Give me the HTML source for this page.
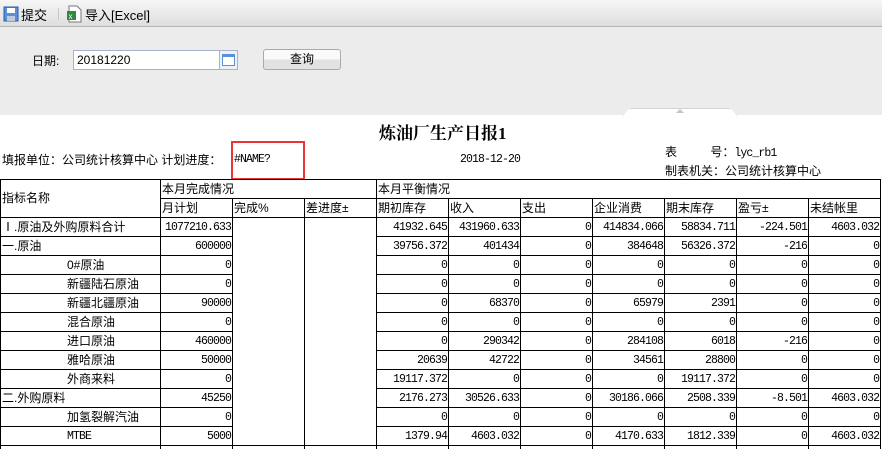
<!DOCTYPE html>
<html style="overflow:hidden;width:882px;height:449px"><head><meta charset="utf-8"><style>
*{margin:0;padding:0;box-sizing:border-box}
body{width:882px;height:449px;overflow:hidden;background:#fff;font-family:"Liberation Sans","Noto Sans CJK SC",sans-serif;font-size:12px;color:#000;position:relative}
.tb{position:absolute;left:0;top:0;width:882px;height:27px;background:linear-gradient(#f6f6f6,#dedede);border-bottom:1px solid #b5b5b5}
.gray{position:absolute;left:0;top:27px;width:882px;height:88px;background:#ececec}
.a{position:absolute;white-space:nowrap}
table{position:absolute;left:0;top:179px;border-collapse:collapse;table-layout:fixed;width:881px}
td{border:1px solid #000;height:19px;padding:0 1px;font-size:12px;line-height:17px;white-space:nowrap;overflow:hidden}
td.n{text-align:right;font-family:"Liberation Mono",monospace;font-size:11.5px;letter-spacing:-0.9px}
td.e{border-top:none;border-bottom:none}
.i{padding-left:66px}
</style></head><body>
<div class="tb"></div>
<svg class="a" style="left:3px;top:6px" width="16" height="16" viewBox="0 0 16 16"><rect x="1" y="1" width="14" height="14" fill="#5b8fd6" stroke="#2b5aa8"/><rect x="4" y="2" width="8" height="5" fill="#fff"/><rect x="4" y="10" width="8" height="5" fill="#bcd"/></svg>
<div class="a" style="left:21px;top:5px;font-size:13px">提交</div>
<div class="a" style="left:58px;top:8px;width:1px;height:12px;background:#c8c8c8"></div>
<svg class="a" style="left:66px;top:5px" width="16" height="18" viewBox="0 0 16 18"><path d="M3 1h8l4 4v12H3z" fill="#fff" stroke="#777"/><rect x="1" y="6" width="9" height="9" fill="#2e8b3e"/><text x="2.5" y="14" font-size="8" fill="#fff" font-family="Liberation Sans">x</text></svg>
<div class="a" style="left:85px;top:5px;font-size:13px">导入[Excel]</div>
<div class="gray"></div>
<div class="a" style="left:32px;top:52px;font-size:12px">日期:</div>
<div class="a" style="left:73px;top:50px;width:147px;height:20px;background:#fff;border:1px solid #a9b2c8;font-size:12px;padding:2px 3px">20181220</div>
<div class="a" style="left:219px;top:50px;width:19px;height:20px;background:#eef2f8;border:1px solid #a9b2c8"><div style="margin:3px 2px;width:13px;height:12px;border:1px solid #5b8fd6;background:#fff;border-top-width:3px"></div></div>
<div class="a" style="left:263px;top:49px;width:78px;height:21px;border:1px solid #aaa;border-radius:3px;background:linear-gradient(#fafafa 50%,#e2e2e2 50%);text-align:center;font-size:12px;line-height:19px">查询</div>
<div class="a" style="left:623px;top:108px;width:114px;height:8px;background:#fff;border:1px solid #d4d4d4;border-bottom:none;clip-path:polygon(6% 0,94% 0,100% 100%,0 100%)"></div>
<div class="a" style="left:676px;top:109px;width:0;height:0;border-left:4px solid transparent;border-right:4px solid transparent;border-bottom:4px solid #c6c6c6"></div>
<div class="a" style="left:379px;top:119px;font-family:'Liberation Serif','Noto Serif CJK SC',serif;font-weight:bold;font-size:17px">炼油厂生产日报1</div>
<div class="a" style="left:2px;top:151px;font-size:12px">填报单位：公司统计核算中心 计划进度：</div>
<div class="a" style="left:231px;top:141px;width:74px;height:39px;border:2px solid #ee3333"></div>
<div class="a" style="left:234px;top:153px;font-family:'Liberation Mono',monospace;font-size:11.5px;letter-spacing:-0.9px">#NAME?</div>
<div class="a" style="left:460px;top:153px;font-family:'Liberation Mono',monospace;font-size:11.5px;letter-spacing:-0.9px">2018-12-20</div>
<div class="a" style="left:665px;top:143px;font-size:12px">表&nbsp;&nbsp;&nbsp;&nbsp;&nbsp;&nbsp;&nbsp;&nbsp;&nbsp;&nbsp;号：<span style="font-family:'Liberation Mono',monospace;font-size:11.5px;letter-spacing:-0.9px">lyc_rb1</span></div>
<div class="a" style="left:665px;top:162px;font-size:12px">制表机关：公司统计核算中心</div>
<table>
<colgroup><col style="width:160px"><col span="10" style="width:72px"></colgroup>
<tr><td rowspan="2">指标名称</td><td colspan="3">本月完成情况</td><td colspan="7">本月平衡情况</td></tr>
<tr><td>月计划</td><td>完成%</td><td>差进度±</td><td>期初库存</td><td>收入</td><td>支出</td><td>企业消费</td><td>期末库存</td><td>盈亏±</td><td>未结帐里</td></tr>
<tr><td>Ⅰ.原油及外购原料合计</td><td class="n">1077210.633</td><td rowspan="12" class="e"></td><td rowspan="12" class="e"></td><td class="n">41932.645</td><td class="n">431960.633</td><td class="n">0</td><td class="n">414834.066</td><td class="n">58834.711</td><td class="n">-224.501</td><td class="n">4603.032</td></tr>
<tr><td>一.原油</td><td class="n">600000</td><td class="n">39756.372</td><td class="n">401434</td><td class="n">0</td><td class="n">384648</td><td class="n">56326.372</td><td class="n">-216</td><td class="n">0</td></tr>
<tr><td class="i">0#原油</td><td class="n">0</td><td class="n">0</td><td class="n">0</td><td class="n">0</td><td class="n">0</td><td class="n">0</td><td class="n">0</td><td class="n">0</td></tr>
<tr><td class="i">新疆陆石原油</td><td class="n">0</td><td class="n">0</td><td class="n">0</td><td class="n">0</td><td class="n">0</td><td class="n">0</td><td class="n">0</td><td class="n">0</td></tr>
<tr><td class="i">新疆北疆原油</td><td class="n">90000</td><td class="n">0</td><td class="n">68370</td><td class="n">0</td><td class="n">65979</td><td class="n">2391</td><td class="n">0</td><td class="n">0</td></tr>
<tr><td class="i">混合原油</td><td class="n">0</td><td class="n">0</td><td class="n">0</td><td class="n">0</td><td class="n">0</td><td class="n">0</td><td class="n">0</td><td class="n">0</td></tr>
<tr><td class="i">进口原油</td><td class="n">460000</td><td class="n">0</td><td class="n">290342</td><td class="n">0</td><td class="n">284108</td><td class="n">6018</td><td class="n">-216</td><td class="n">0</td></tr>
<tr><td class="i">雅哈原油</td><td class="n">50000</td><td class="n">20639</td><td class="n">42722</td><td class="n">0</td><td class="n">34561</td><td class="n">28800</td><td class="n">0</td><td class="n">0</td></tr>
<tr><td class="i">外商来料</td><td class="n">0</td><td class="n">19117.372</td><td class="n">0</td><td class="n">0</td><td class="n">0</td><td class="n">19117.372</td><td class="n">0</td><td class="n">0</td></tr>
<tr><td>二.外购原料</td><td class="n">45250</td><td class="n">2176.273</td><td class="n">30526.633</td><td class="n">0</td><td class="n">30186.066</td><td class="n">2508.339</td><td class="n">-8.501</td><td class="n">4603.032</td></tr>
<tr><td class="i">加氢裂解汽油</td><td class="n">0</td><td class="n">0</td><td class="n">0</td><td class="n">0</td><td class="n">0</td><td class="n">0</td><td class="n">0</td><td class="n">0</td></tr>
<tr><td class="i" style="font-family:'Liberation Mono',monospace;font-size:11.5px;letter-spacing:-0.9px">MTBE</td><td class="n">5000</td><td class="n">1379.94</td><td class="n">4603.032</td><td class="n">0</td><td class="n">4170.633</td><td class="n">1812.339</td><td class="n">0</td><td class="n">4603.032</td></tr>
<tr><td></td><td></td><td></td><td></td><td></td><td></td><td></td><td></td><td></td><td></td><td></td></tr>
</table>
</body></html>
